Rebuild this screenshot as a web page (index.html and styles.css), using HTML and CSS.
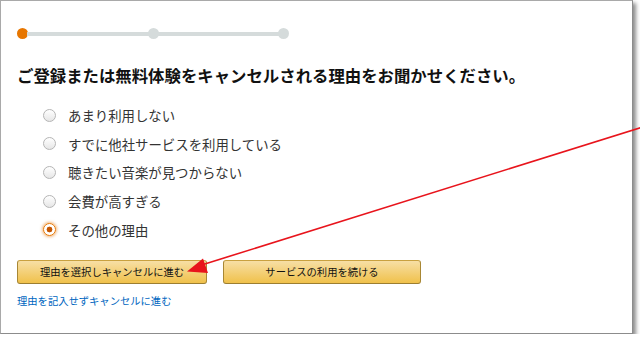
FILE: index.html
```html
<!DOCTYPE html>
<html lang="ja">
<head>
    <meta charset="UTF-8">
    <meta name="viewport" content="width=device-width, initial-scale=1.0">
    <title>キャンセル</title>
    <link rel="stylesheet" href="styles.css">
</head>
<body>
    <div class="frame">
        <div class="steps">
            <span class="dot active"></span>
            <span class="bar"></span>
            <span class="dot"></span>
            <span class="bar"></span>
            <span class="dot"></span>
        </div>

        <h1 class="title">ご登録または無料体験をキャンセルされる理由をお聞かせください。</h1>

        <ul class="reasons">
            <li><span class="radio"></span>あまり利用しない</li>
            <li><span class="radio"></span>すでに他社サービスを利用している</li>
            <li><span class="radio"></span>聴きたい音楽が見つからない</li>
            <li><span class="radio"></span>会費が高すぎる</li>
            <li><span class="radio checked"></span>その他の理由</li>
        </ul>

        <div class="actions">
            <button class="btn first">理由を選択しキャンセルに進む</button>
            <button class="btn second">サービスの利用を続ける</button>
        </div>

        <a class="skip" href="#">理由を記入せずキャンセルに進む</a>

        <svg class="arrow" width="640" height="342" viewBox="0 0 640 342">
            <line x1="641" y1="127.5" x2="200" y2="265.5" stroke="#e8141c" stroke-width="1.6"/>
            <polygon points="187,271.5 203,258.5 208,273" fill="#e8141c"/>
        </svg>
    </div>
</body>
</html>
```

FILE: styles.css
```css
body{
    margin: 0;
    background: #fff;
    font-family: "Noto Sans CJK JP", "Noto Sans", sans-serif;
}

.frame{
    position: relative;
    width: 615px;
    height: 305px;
    padding: 27px 0 0 16px;
    border: 1px solid #a9a9a9;
    border-right-color: #8c8c8c;
    border-bottom-color: #8c8c8c;
    background: #fff;
    box-shadow: 3px 3px 4px rgba(0,0,0,.45);
}

.steps{
    display: flex;
    align-items: center;
    width: 272px;
    height: 11px;
}
.dot{
    width: 11px;
    height: 11px;
    border-radius: 50%;
    background: #d5dbdb;
    flex: none;
}
.dot.active{
    background: #e77600;
}
.bar{
    flex: 1;
    height: 4px;
    margin: 0 -1px;
    background: #d5dbdb;
}

.title{
    margin: 24px 0 0;
    font-size: 16.4px;
    line-height: 24px;
    font-weight: 700;
    color: #111;
}

.reasons{
    list-style: none;
    margin: 14px 0 0;
    padding: 0;
}
.reasons li{
    display: flex;
    align-items: center;
    height: 28.6px;
    font-size: 13.4px;
    color: #333;
}
.radio{
    width: 11px;
    height: 11px;
    margin: 0 12px 0 26px;
    border: 1px solid #b5b5b5;
    border-radius: 50%;
    background: linear-gradient(#fff, #e6e6e6);
    flex: none;
}
.radio.checked{
    border-color: #e77600;
    background: radial-gradient(circle, #c45500 0 2.6px, #fff 3.2px);
    box-shadow: 0 0 3px 1px rgba(228,121,17,.55);
}

.actions{
    display: flex;
    gap: 16px;
    margin: 16px 0 0;
}
.btn{
    height: 24px;
    padding: 0;
    border: 1px solid;
    border-color: #c9a13f #a88734 #9c7e31;
    border-radius: 3px;
    background: linear-gradient(#f7dfa5, #f0c14b);
    font-family: inherit;
    font-size: 10.3px;
    color: #111;
}
.btn.first{
    width: 190px;
}
.btn.second{
    width: 198px;
}

.skip{
    display: block;
    margin: 9px 0 0;
    font-size: 10.3px;
    line-height: 16px;
    color: #0066c0;
    text-decoration: none;
}

.arrow{
    position: absolute;
    left: -1px;
    top: -1px;
    overflow: visible;
    pointer-events: none;
}
```
